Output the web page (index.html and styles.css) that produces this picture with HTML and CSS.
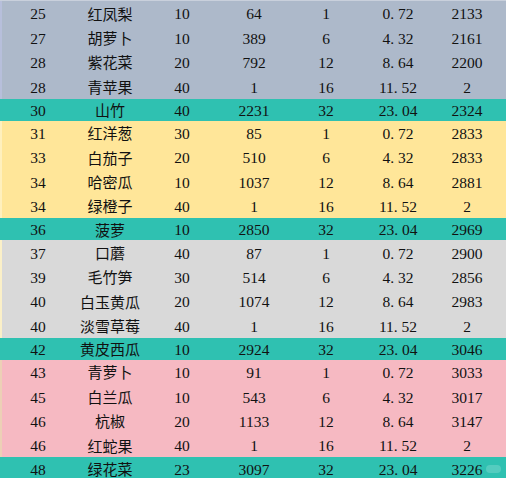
FILE: index.html
```html
<!DOCTYPE html>
<html lang="zh">
<head>
<meta charset="utf-8">
<link rel="stylesheet" href="styles.css">
</head>
<body>
<div class="sheet">
  <div class="row g1"><span class="edge"></span><span>25</span><span class="cn">红凤梨</span><span>10</span><span>64</span><span>1</span><span>0<span class="dot">.</span>72</span><span class="last">2133</span></div>
  <div class="row g1"><span class="edge"></span><span>27</span><span class="cn">胡萝卜</span><span>10</span><span>389</span><span>6</span><span>4<span class="dot">.</span>32</span><span class="last">2161</span></div>
  <div class="row g1"><span class="edge"></span><span>28</span><span class="cn">紫花菜</span><span>20</span><span>792</span><span>12</span><span>8<span class="dot">.</span>64</span><span class="last">2200</span></div>
  <div class="row g1"><span class="edge"></span><span>28</span><span class="cn">青苹果</span><span>40</span><span>1</span><span>16</span><span>11<span class="dot">.</span>52</span><span class="last">2</span></div>
  <div class="row hl"><span class="edge"></span><span>30</span><span class="cn">山竹</span><span>40</span><span>2231</span><span>32</span><span>23<span class="dot">.</span>04</span><span class="last">2324</span></div>

  <div class="row g2"><span class="edge"></span><span>31</span><span class="cn">红洋葱</span><span>30</span><span>85</span><span>1</span><span>0<span class="dot">.</span>72</span><span class="last">2833</span></div>
  <div class="row g2"><span class="edge"></span><span>33</span><span class="cn">白茄子</span><span>20</span><span>510</span><span>6</span><span>4<span class="dot">.</span>32</span><span class="last">2833</span></div>
  <div class="row g2"><span class="edge"></span><span>34</span><span class="cn">哈密瓜</span><span>10</span><span>1037</span><span>12</span><span>8<span class="dot">.</span>64</span><span class="last">2881</span></div>
  <div class="row g2"><span class="edge"></span><span>34</span><span class="cn">绿橙子</span><span>40</span><span>1</span><span>16</span><span>11<span class="dot">.</span>52</span><span class="last">2</span></div>
  <div class="row hl"><span class="edge"></span><span>36</span><span class="cn">菠萝</span><span>10</span><span>2850</span><span>32</span><span>23<span class="dot">.</span>04</span><span class="last">2969</span></div>

  <div class="row g3"><span class="edge"></span><span>37</span><span class="cn">口蘑</span><span>40</span><span>87</span><span>1</span><span>0<span class="dot">.</span>72</span><span class="last">2900</span></div>
  <div class="row g3"><span class="edge"></span><span>39</span><span class="cn">毛竹笋</span><span>30</span><span>514</span><span>6</span><span>4<span class="dot">.</span>32</span><span class="last">2856</span></div>
  <div class="row g3"><span class="edge"></span><span>40</span><span class="cn">白玉黄瓜</span><span>20</span><span>1074</span><span>12</span><span>8<span class="dot">.</span>64</span><span class="last">2983</span></div>
  <div class="row g3"><span class="edge"></span><span>40</span><span class="cn">淡雪草莓</span><span>40</span><span>1</span><span>16</span><span>11<span class="dot">.</span>52</span><span class="last">2</span></div>
  <div class="row hl"><span class="edge"></span><span>42</span><span class="cn">黄皮西瓜</span><span>10</span><span>2924</span><span>32</span><span>23<span class="dot">.</span>04</span><span class="last">3046</span></div>

  <div class="row g4"><span class="edge"></span><span>43</span><span class="cn">青萝卜</span><span>10</span><span>91</span><span>1</span><span>0<span class="dot">.</span>72</span><span class="last">3033</span></div>
  <div class="row g4"><span class="edge"></span><span>45</span><span class="cn">白兰瓜</span><span>10</span><span>543</span><span>6</span><span>4<span class="dot">.</span>32</span><span class="last">3017</span></div>
  <div class="row g4"><span class="edge"></span><span>46</span><span class="cn">杭椒</span><span>20</span><span>1133</span><span>12</span><span>8<span class="dot">.</span>64</span><span class="last">3147</span></div>
  <div class="row g4"><span class="edge"></span><span>46</span><span class="cn">红蛇果</span><span>40</span><span>1</span><span>16</span><span>11<span class="dot">.</span>52</span><span class="last">2</span></div>
  <div class="row hl"><span class="edge"></span><span>48</span><span class="cn">绿花菜</span><span>23</span><span>3097</span><span>32</span><span>23<span class="dot">.</span>04</span><span class="last">3226</span></div>
  <div class="mark"></div>
</div>
</body>
</html>
```
FILE: styles.css
```css
html, body {
  margin: 0;
  padding: 0;
  width: 506px;
  height: 478px;
  overflow: hidden;
  background: #2fc1b1;
}
.sheet {
  position: relative;
  width: 506px;
  height: 478px;
  font-family: "Liberation Serif", "Noto Sans CJK SC", serif;
  font-size: 15.5px;
  color: #111;
  border-top: 1px solid #c9d0dc;
  box-sizing: border-box;
}
.row {
  display: grid;
  grid-template-columns: 2px 72px 72px 72px 72px 72px 72px 1fr;
  align-items: center;
  height: 24.4px;
  text-align: center;
  line-height: 1;
}
.row > span {
  padding-top: 2px;
}
.row > .edge {
  align-self: stretch;
  padding: 0;
}
.row .cn {
  font-family: "Noto Sans CJK SC", sans-serif;
  font-size: 15px;
  padding-top: 0;
}
.row .last {
  padding-right: 6px;
}
.dot {
  display: inline-block;
  width: 0.5em;
  text-align: left;
}
.hl { height: 22px; background: #2fc1b1; }
.hl .edge { background: #2fc1b1; }
.g1 { background: #adb9ca; }
.g1 .edge { background: #b7bfdb; }
.g2 { background: #ffe699; }
.g2 .edge { background: #fff0bd; }
.g3 { background: #d9d9d9; }
.g3 .edge { background: #fbf0c8; }
.g4 { background: #f6b9c2; }
.g4 .edge { background: #ecd0b6; }
.mark {
  position: absolute;
  right: 5px;
  bottom: 5px;
  width: 15px;
  height: 8px;
  border-radius: 4px;
  background: rgba(255, 255, 255, 0.18);
}
```
